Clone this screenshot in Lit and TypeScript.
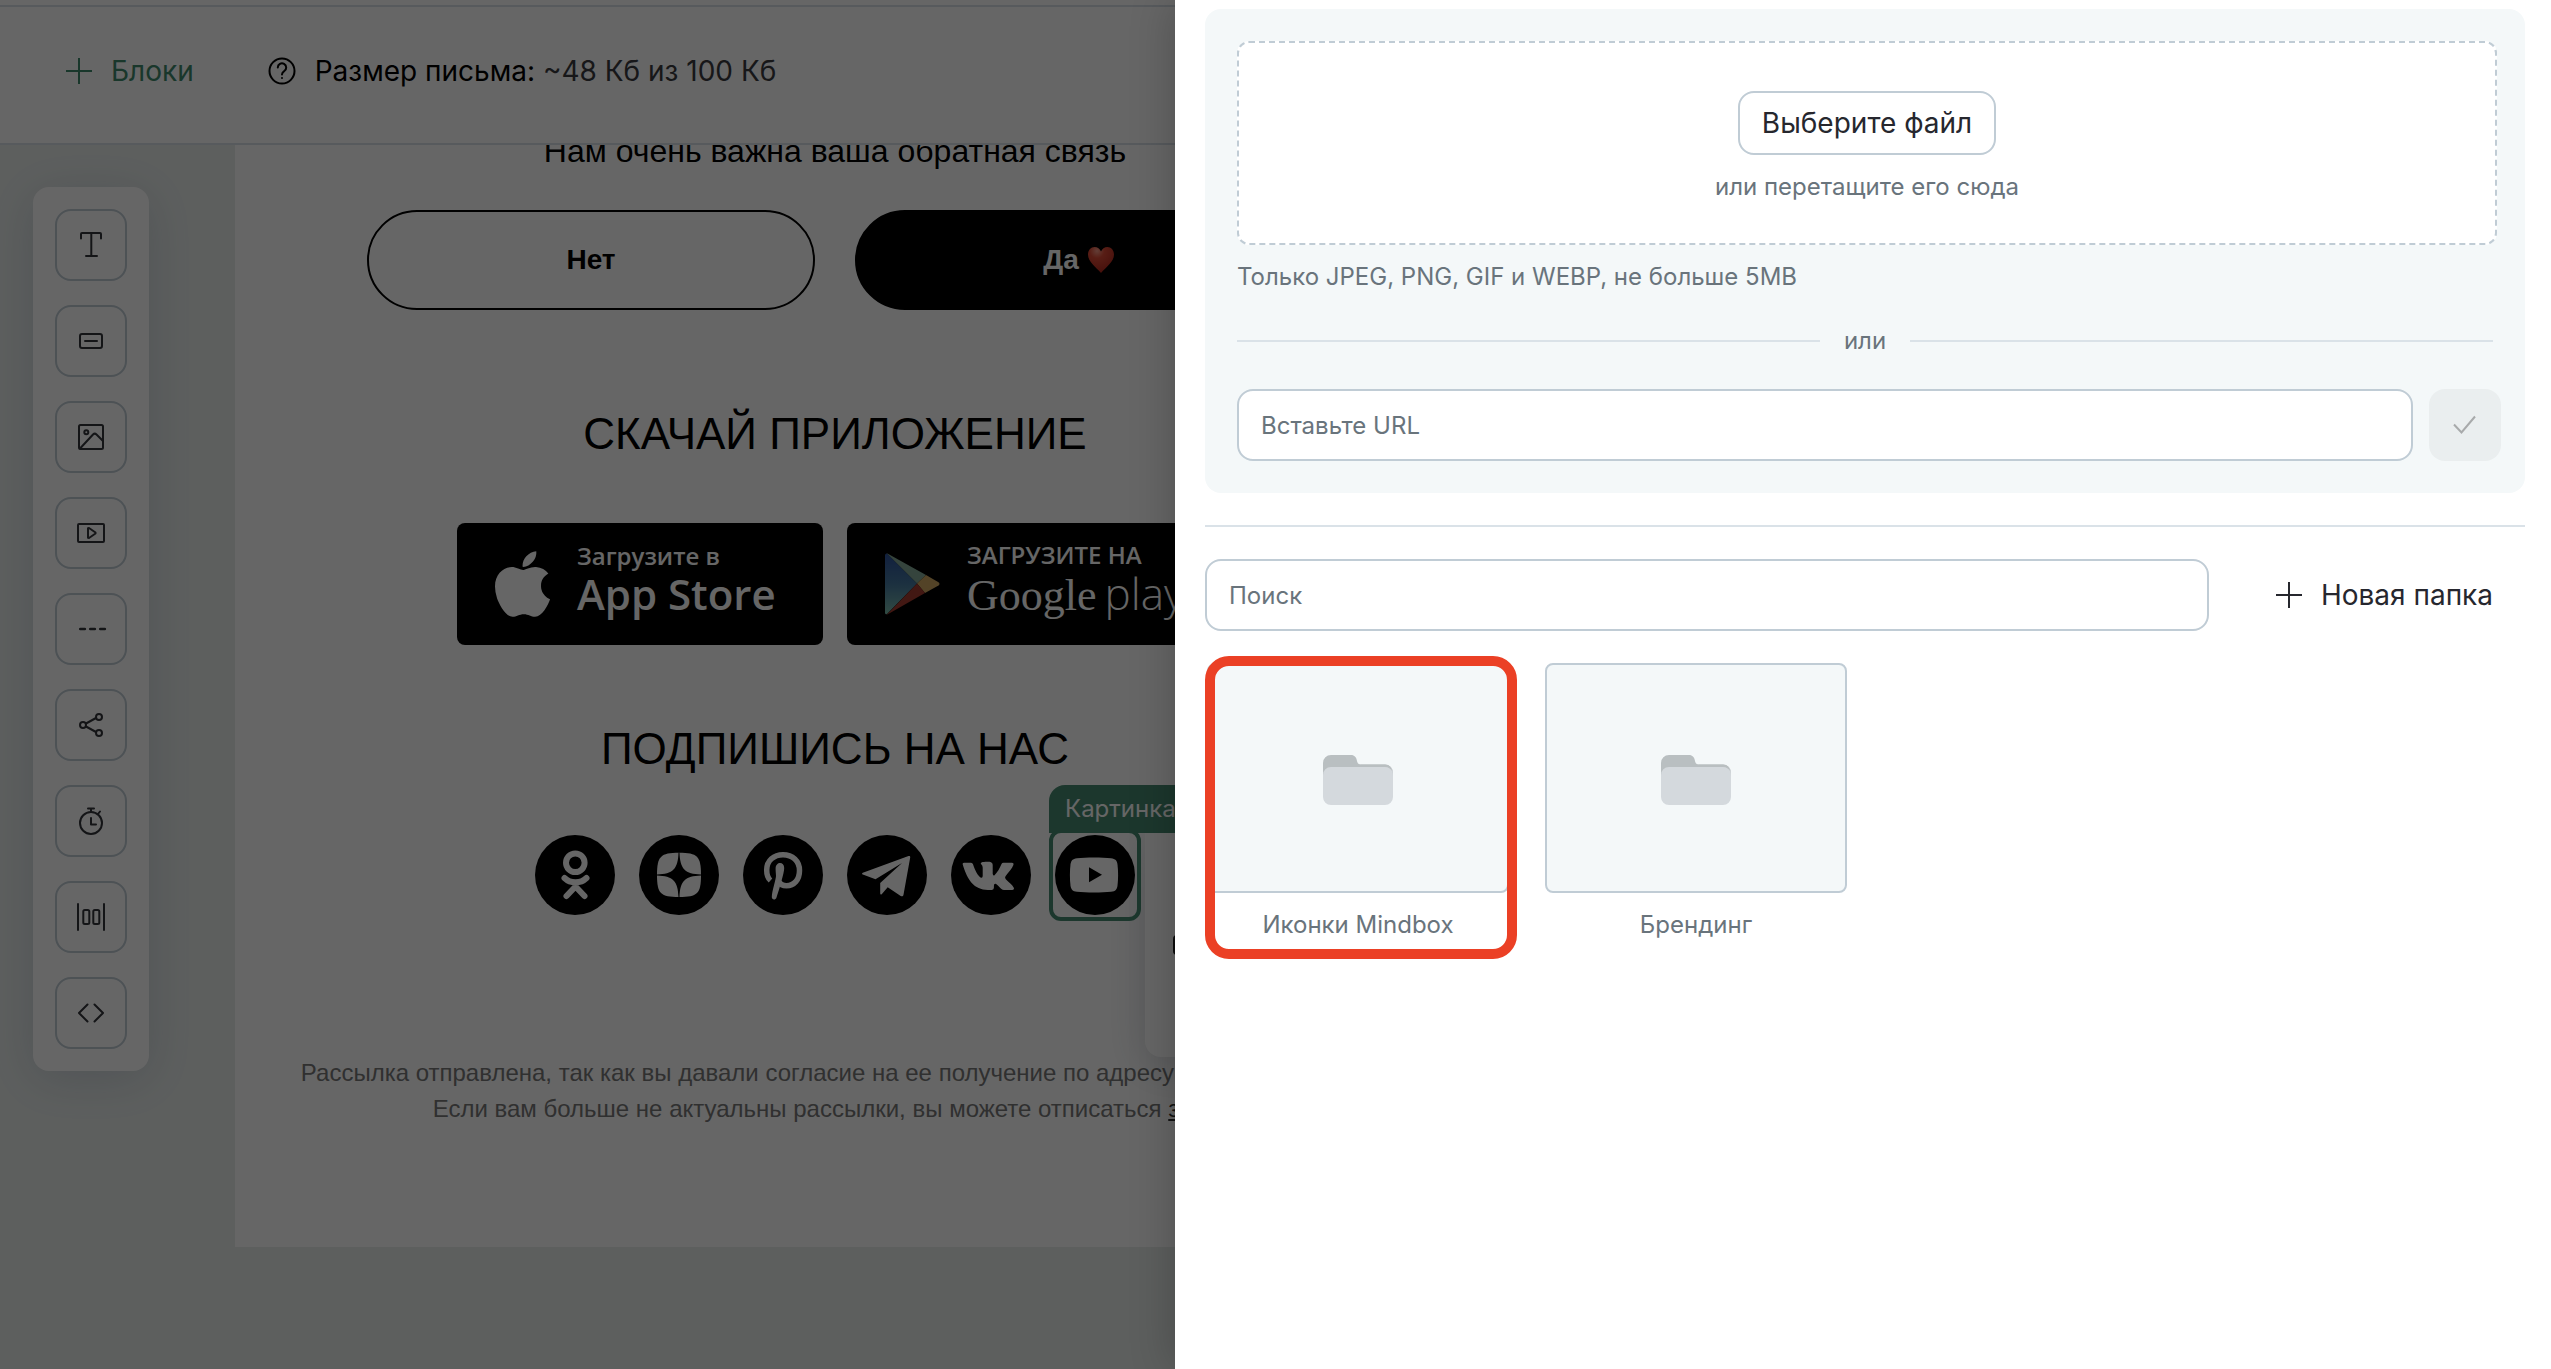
import { LitElement, html, svg, css, type SVGTemplateResult } from "lit";
import { customElement, property } from "lit/decorators.js";

interface Tool {
  label: string;
  icon: SVGTemplateResult;
}

const TOOLS: Tool[] = [
  { label: "Текст", icon: svg`<path d="M8 11.500V7a1 1 0 0 1 1-1h18a1 1 0 0 1 1 1v4.500M18.300 6v23M13 29h11"/>` },
  { label: "Кнопка", icon: svg`<rect x="7" y="11" width="22" height="14" rx="2"/><path d="M12 18h12"/>` },
  {
    label: "Изображение",
    icon: svg`<rect x="6" y="6" width="24" height="24" rx="1.500"/><circle cx="13.300" cy="13.300" r="2"/><path d="M7 29.500L20 15.500a2.500 2.500 0 0 1 3.500 0L30 22"/>`,
  },
  {
    label: "Видео",
    icon: svg`<rect x="5" y="9" width="26" height="18" rx="1"/><path d="M15 13.200v9.600l1 .2 6.500-4.500v-1L16 13z"/>`,
  },
  { label: "Разделитель", icon: svg`<path stroke-width="2.700" d="M7.300 18h4.500M17.300 18h4.500M27.300 18h4.500"/>` },
  {
    label: "Соцсети",
    icon: svg`<circle cx="10" cy="18" r="3"/><circle cx="26" cy="10" r="3"/><circle cx="26" cy="26" r="3"/><path d="M13 16.500l10-5.500M13 19.500L23 25"/>`,
  },
  {
    label: "Таймер",
    icon: svg`<circle cx="18" cy="20" r="11"/><path d="M15 5.500h6M18 5.500V9M25 11l2-2.500M18 15v6.500h5"/>`,
  },
  {
    label: "Колонки",
    icon: svg`<path d="M5 5v26M31 5v26"/><rect x="10.300" y="11" width="6" height="14" rx="1.500"/><rect x="20.300" y="11" width="6" height="14" rx="1.500"/>`,
  },
  { label: "HTML", icon: svg`<path d="M14.500 9.500L6 18l8.500 8.500M21.500 9.500L30 18l-8.500 8.500"/>` },
];

interface Social {
  name: string;
  selected?: boolean;
  mark: SVGTemplateResult;
}

const SOCIALS: Social[] = [
  {
    name: "Одноклассники",
    mark: svg`<g fill="none" stroke="#fff" stroke-width="6" stroke-linecap="round" stroke-linejoin="round">
      <circle cx="40.300" cy="27.700" r="9.300"/><path d="M29.500 43c6 5.800 16 5.800 22 0M31.500 61l9-9.500 9 9.500M40.500 47.500v4"/></g>`,
  },
  {
    name: "Дзен",
    mark: svg`<path fill="#fff" d="M40 17.700c18.500 0 22 3.500 22 22.300s-3.500 22-22 22-22-3.300-22-22 3.500-22.300 22-22.300z"/>
      <path d="M39.500 17.500h1C41 34 46 39 62 39.500v1C46 41 41 46 40.500 62h-1C39 46 34 41 18 40.500v-1C34 39 39 34 39.500 17.500z"/>`,
  },
  {
    name: "Pinterest",
    mark: svg`<path fill="none" stroke="#fff" stroke-width="5.500" d="M27.500 45.500C24.500 43 23.700 38.500 23.700 35 23.700 25.500 31 19.700 40 19.700c9.500 0 16.500 6.300 16.500 15.800S51 50.700 43.500 50.700c-4 0-6.500-2-7.500-4"/>
      <path fill="#fff" d="M32.600 33.500c0-7 8.600-7.500 8.600-.5 0 5-5.200 22-7.700 29.500-1 3-4.800 2.500-4.700-.5.200-6 4.200-18 4.200-21 0-2-.4-5-.4-7.500z"/>`,
  },
  {
    name: "Telegram",
    mark: svg`<path fill="#fff" d="M15.800 37.700L61.500 21c1.300-.4 1.900.3 1.700 1.500l-6.700 37.300c-.4 1.600-1.500 1.900-2.800 1.100L40.700 52.300l-6 6.900c-.7.700-1.500.5-1.500-.6V48L55 28 28.500 44.300 15.800 39.500c-1-.4-1-1.400 0-1.800z"/>`,
  },
  {
    name: "ВКонтакте",
    mark: svg`<path fill="#fff" d="M11.700 29.500q-.5-1.800 1.300-1.800h7q1.500 0 2 1.500c2 6 5 12 8 13.500q1.700.5 1.700-2v-8q0-2.300-1.500-3.500-1.200-1.200.3-1.700c2-.8 8-.8 9.500-.3q1.700.5 1.700 2.500v9q.3 2.500 1.800 1.500c3-3 5-7 7-11.300q.5-1.200 2-1.200h8.500q2 .2 1.500 2c-1.500 4-5 7.500-8 11.500q-1 1.500.3 3c3 3 6.500 5.500 8 8.500q.8 2-1.700 2.200h-8q-1.500 0-3-1.200c-2-2-4-4.500-5.500-5q-1.700-.3-1.700 2v2q0 2-2 2.200h-4c-14 0-20.500-10-25.200-25.400z"/>`,
  },
  {
    name: "YouTube",
    selected: true,
    mark: svg`<path fill="#fff" d="M22 23.200c9-1 25-1 34 0 4.500.5 6 2.300 6.500 6.300.8 6.500.8 14.500 0 21-.5 4-2 5.800-6.500 6.300-9 1-25 1-34 0-4.500-.5-6-2.300-6.500-6.300-.8-6.500-.8-14.500 0-21 .5-4 2-5.800 6.500-6.300z"/><path d="M34 32.300v14.900l13-7.500z"/>`,
  },
];

const plusIcon = html`<svg class="plus" viewBox="0 0 26 26" width="26" height="26" aria-hidden="true">
  <path d="M13 0v26M0 13h26" fill="none" stroke="currentColor" stroke-width="2" />
</svg>`;

@customElement("tool-rail")
export class ToolRail extends LitElement {
  static styles = css`
    :host {
      display: block;
      flex: none;
    }
    .rail {
      display: flex;
      flex-direction: column;
      gap: 24px;
      padding: 22px;
      border-radius: 16px;
      background: #fff;
      box-shadow: 0 8px 48px rgba(70, 90, 130, 0.2);
    }
    .tool {
      display: flex;
      align-items: center;
      justify-content: center;
      width: 72px;
      height: 72px;
      padding: 0;
      border: 2px solid #c0ccd5;
      border-radius: 16px;
      background: none;
      color: #33353a;
    }
    svg {
      fill: none;
      stroke: currentColor;
      stroke-width: 2;
      stroke-linejoin: round;
      stroke-linecap: round;
    }
  `;

  render() {
    return html`<nav class="rail" aria-label="Блоки письма">
      ${TOOLS.map(
        (t) => html`<button class="tool" type="button" aria-label=${t.label}>
          <svg viewBox="0 0 36 36" width="36" height="36">${t.icon}</svg>
        </button>`,
      )}
    </nav>`;
  }
}

@customElement("email-preview")
export class EmailPreview extends LitElement {
  static styles = css`
    :host {
      display: block;
      flex: 0 1 1200px;
      font-family: "Liberation Sans", Arial, sans-serif;
      color: #000;
    }
    .mail {
      display: flex;
      flex-direction: column;
      align-items: center;
      padding-bottom: 120px;
      background: #fff;
      white-space: nowrap;
    }
    .lead {
      margin: -14px 0 0;
      font-size: 32px;
      line-height: 40px;
      font-weight: 400;
    }
    .answers {
      display: flex;
      gap: 40px;
      margin-top: 39px;
    }
    .answer {
      display: flex;
      align-items: center;
      justify-content: center;
      gap: 8px;
      box-sizing: border-box;
      width: 448px;
      height: 100px;
      border: 2px solid #000;
      border-radius: 50px;
      font-size: 28px;
      font-weight: 700;
      color: #000;
      text-decoration: none;
    }
    .filled {
      background: #000;
      color: #fff;
    }
    .title {
      margin: 98px 0 0;
      font-size: 44px;
      line-height: 52px;
      font-weight: 400;
    }
    .follow {
      margin-top: 78px;
    }
    .stores {
      display: flex;
      gap: 24px;
      margin-top: 63px;
    }
    .store {
      display: flex;
      align-items: center;
      box-sizing: border-box;
      width: 366px;
      height: 122px;
      padding-left: 38px;
      gap: 27px;
      border-radius: 8px;
      background: #000;
      color: #fff;
      text-decoration: none;
      font-family: "Open Sans", "Noto Sans", sans-serif;
    }
    .store-text {
      display: flex;
      flex-direction: column;
      padding-bottom: 8px;
    }
    .store-small {
      font-size: 24px;
      line-height: 28px;
      font-weight: 600;
    }
    .store-big {
      display: flex;
      align-items: baseline;
      gap: 8px;
      font-size: 44px;
      line-height: 48px;
      font-weight: 400;
    }
    .semibold {
      font-size: 42px;
      font-weight: 600;
    }
    .google {
      font-family: "Liberation Serif", serif;
    }
    .play {
      font-weight: 300;
    }
    .socials {
      display: flex;
      gap: 24px;
      margin-top: 60px;
    }
    .social {
      position: relative;
      display: block;
      width: 80px;
      height: 80px;
    }
    .social svg {
      display: block;
    }
    .frame {
      position: absolute;
      inset: -6px;
      border: 4px solid #468a70;
      border-radius: 12px;
    }
    .tag {
      position: absolute;
      left: -6px;
      bottom: 82px;
      padding: 0 16px;
      border-radius: 16px 16px 0 0;
      background: #468a70;
      color: #fff;
      font: 400 24px/48px Inter, sans-serif;
    }
    .popover {
      position: absolute;
      left: 90px;
      top: -2px;
      box-sizing: border-box;
      width: 400px;
      height: 224px;
      padding: 102px 28px 0;
      border-radius: 0 0 16px 16px;
      background: #fff;
      box-shadow: 0 8px 40px rgba(50, 60, 80, 0.2);
    }
    .check {
      display: block;
      width: 16px;
      height: 16px;
      border: 2px solid #222;
      border-radius: 4px;
    }
    .footer {
      margin: 140px 0 0;
      font-size: 24px;
      line-height: 36px;
      text-align: center;
      color: #787878;
    }
    .footer a {
      color: #333;
    }
  `;

  render() {
    return html`<article class="mail">
      <h2 class="lead">Нам очень важна ваша обратная связь</h2>
      <div class="answers">
        <a class="answer" href="#no">Нет</a>
        <a class="answer filled" href="#yes"
          >Да
          <svg viewBox="0 0 28 28" width="28" height="28" aria-hidden="true">
            <defs>
              <radialGradient id="heart" cx="35%" cy="15%" r="80%">
                <stop offset="0" stop-color="#f59a88" />
                <stop offset="0.350" stop-color="#dc4a36" />
                <stop offset="1" stop-color="#b52c20" />
              </radialGradient>
            </defs>
            <path fill="url(#heart)" d="M14 27C9 21 1 16 1 8.500 1 4 4 1 7.500 1c3 0 5.500 2 6.500 4.500C15 3 17.500 1 20.500 1 24 1 27 4 27 8.500 27 16 19 21 14 27z" />
          </svg>
        </a>
      </div>

      <h2 class="title">СКАЧАЙ ПРИЛОЖЕНИЕ</h2>
      <div class="stores">
        <a class="store" href="#app-store">
          <svg viewBox="4 32 376 448" width="55" height="66" aria-hidden="true">
            <path fill="#fff" d="M318.700 268.700c-.2-36.700 16.400-64.400 50-84.800-18.800-26.900-47.200-41.700-84.700-44.600-35.500-2.800-74.300 20.700-88.500 20.700-15 0-49.400-19.700-76.400-19.700C63.300 141.200 4 184.800 4 273.500q0 39.300 14.400 81.200c12.800 36.700 59 126.700 107.200 125.200 25.200-.6 43-17.900 75.800-17.900 31.800 0 48.300 17.900 76.400 17.900 48.600-.7 90.400-82.500 102.600-119.300-65.200-30.700-61.700-90-61.700-91.900zm-56.600-164.200c27.300-32.400 24.800-61.900 24-72.500-24.100 1.400-52 16.400-67.900 34.900-17.500 19.800-27.800 44.300-25.600 71.900 26.100 2 49.900-11.400 69.500-34.300z" />
          </svg>
          <span class="store-text">
            <span class="store-small">Загрузите в</span>
            <span class="store-big"><span class="semibold">App Store</span></span>
          </span>
        </a>
        <a class="store" href="#google-play">
          <svg viewBox="0 0 55 62" width="55" height="62" aria-hidden="true">
            <defs>
              <linearGradient id="blue" x1="0" y1="0" x2="0" y2="1">
                <stop offset="0" stop-color="#2d519c" />
                <stop offset="0.500" stop-color="#4679a0" />
                <stop offset="1" stop-color="#7cbcaa" />
              </linearGradient>
            </defs>
            <path fill="url(#blue)" d="M0 2v58q.5 2 2 1l30-30.500L2 .500Q.5 0 0 2z" />
            <path fill="#86ab98" d="M1.500 0L41 22l-9 8.500z" />
            <path fill="#d0a962" d="M41 22l12.500 7.300q2 1.700 0 3.200L40 40l-8-9.500z" />
            <path fill="#a53c30" d="M32 30.500l8 9.500L1.500 62z" />
          </svg>
          <span class="store-text">
            <span class="store-small">ЗАГРУЗИТЕ НА</span>
            <span class="store-big"><span class="google">Google</span> <span class="play">play</span></span>
          </span>
        </a>
      </div>

      <h2 class="title follow">ПОДПИШИСЬ НА НАС</h2>
      <div class="socials">
        ${SOCIALS.map(
          (s) => html`<a class="social" href="#social" aria-label=${s.name}>
            <svg viewBox="0 0 80 80" width="80" height="80"><circle cx="40" cy="40" r="40" />${s.mark}</svg>
            ${s.selected
              ? html`<span class="popover"><span class="check"></span></span>
                  <span class="frame"></span><span class="tag">Картинка</span>`
              : null}
          </a>`,
        )}
      </div>

      <p class="footer">
        Рассылка отправлена, так как вы давали согласие на ее получение по адресу info@example.ru.<br />
        Если вам больше не актуальны рассылки, вы можете отписаться <a href="#unsubscribe">здесь</a>.
      </p>
    </article>`;
  }
}

@customElement("folder-card")
export class FolderCard extends LitElement {
  @property() name = "";
  @property({ type: Boolean, reflect: true }) highlighted = false;

  static styles = css`
    :host {
      position: relative;
      display: block;
    }
    .card {
      display: flex;
      flex-direction: column;
      align-items: center;
      gap: 16px;
      padding: 0;
      border: 0;
      background: none;
      font: 400 24px/32px Inter, sans-serif;
      color: #69747c;
    }
    .tile {
      display: flex;
      align-items: center;
      justify-content: center;
      box-sizing: border-box;
      width: 302px;
      height: 230px;
      padding-top: 4px;
      border: 2px solid #c0ccd5;
      border-radius: 8px;
      background: #f4f8f9;
    }
    :host([highlighted])::after {
      content: "";
      position: absolute;
      inset: -7px -8px -18px -2px;
      border: 10px solid #eb4025;
      border-radius: 24px;
      pointer-events: none;
    }
  `;

  render() {
    return html`<button class="card" type="button">
      <span class="tile">
        <svg viewBox="0 0 70 50" width="70" height="50" aria-hidden="true">
          <path fill="#b9bfc1" d="M0 20V8a8 8 0 0 1 8-8h20c3.500 0 5.500 2.500 6 6 .4 2.500 2 3.500 4.500 3.500H62a8 8 0 0 1 8 8V30H0z" />
          <path fill="#d4d9dd" d="M8 12h54c3 0 5.500-.5 6.500 1 1 1.500 1.500 4 1.500 8v21a8 8 0 0 1-8 8H8a8 8 0 0 1-8-8V20a8 8 0 0 1 8-8z" />
          <path fill="#b9bfc1" d="M38 9.500H62c4 0 6.500 3 7.500 7-2-3-4-4.500-7.500-4.500H36z" />
        </svg>
      </span>
      <span>${this.name}</span>
    </button>`;
  }
}

@customElement("image-drawer")
export class ImageDrawer extends LitElement {
  static styles = css`
    :host {
      display: block;
      box-sizing: border-box;
      padding: 9px 26px 0 30px;
      background: #fff;
      box-shadow: -4px 0 40px rgba(0, 0, 0, 0.2);
      font: 400 24px/32px Inter, sans-serif;
      color: #69747c;
    }
    .upload {
      display: flex;
      flex-direction: column;
      padding: 32px 24px 32px 32px;
      border-radius: 16px;
      background: #f4f8f9;
    }
    .drop {
      display: flex;
      flex-direction: column;
      align-items: center;
      gap: 16px;
      margin-right: 4px;
      padding: 48px 0 40px;
      border: 2px dashed #c0ccd5;
      border-radius: 12px;
      background: #fff;
    }
    .choose {
      height: 64px;
      padding: 0 22px;
      border: 2px solid #c0ccd5;
      border-radius: 16px;
      background: #fff;
      font: 400 28px/32px Inter, sans-serif;
      color: #26272e;
    }
    .hint {
      margin: 16px 0 0;
    }
    .or {
      display: flex;
      align-items: center;
      gap: 24px;
      margin: 32px 8px 32px 0;
    }
    .or::before,
    .or::after {
      content: "";
      flex: 1;
      height: 2px;
      background: #dae2e8;
    }
    .row {
      display: flex;
      gap: 16px;
    }
    .field {
      flex: 1;
      min-width: 0;
      box-sizing: border-box;
      height: 72px;
      padding: 0 22px;
      border: 2px solid #c0ccd5;
      border-radius: 16px;
      background: #fff;
      font: 400 24px/32px Inter, sans-serif;
      color: #26272e;
    }
    .field::placeholder {
      color: #69747c;
      opacity: 1;
    }
    .apply {
      display: flex;
      align-items: center;
      justify-content: center;
      width: 72px;
      height: 72px;
      padding: 0;
      border: 0;
      border-radius: 16px;
      background: #eaeeef;
      color: #a8aaab;
    }
    .rule {
      height: 2px;
      margin: 32px 0;
      border: 0;
      background: #dae2e8;
    }
    .create {
      display: flex;
      align-items: center;
      gap: 19px;
      margin-left: 51px;
      padding: 0 32px 0 0;
      border: 0;
      background: none;
      font: 400 28px/32px Inter, sans-serif;
      color: #26272e;
    }
    .folders {
      display: flex;
      flex-wrap: wrap;
      gap: 36px;
      padding: 32px 2px;
    }
    .sr {
      position: absolute;
      width: 1px;
      height: 1px;
      overflow: hidden;
      clip-path: inset(50%);
    }
  `;

  render() {
    return html`
      <section class="upload">
        <div class="drop">
          <button class="choose" type="button">Выберите файл</button>
          <span>или перетащите его сюда</span>
        </div>
        <p class="hint">Только JPEG, PNG, GIF и WEBP, не больше 5MB</p>
        <div class="or">или</div>
        <div class="row">
          <label class="sr" for="url">URL изображения</label>
          <input class="field" id="url" type="url" placeholder="Вставьте URL" />
          <button class="apply" type="button" aria-label="Применить" disabled>
            <svg viewBox="0 0 24 24" width="24" height="24">
              <path d="M1 11.500l7.500 8L22 3.500" fill="none" stroke="currentColor" stroke-width="2" />
            </svg>
          </button>
        </div>
      </section>
      <hr class="rule" />
      <div class="row">
        <label class="sr" for="search">Поиск по папкам</label>
        <input class="field" id="search" type="text" placeholder="Поиск" />
        <button class="create" type="button">${plusIcon}<span>Новая папка</span></button>
      </div>
      <div class="folders">
        <folder-card name="Иконки Mindbox" highlighted></folder-card>
        <folder-card name="Брендинг"></folder-card>
      </div>
    `;
  }
}

@customElement("app-root")
export class AppRoot extends LitElement {
  static styles = css`
    :host {
      position: relative;
      display: block;
      height: 100vh;
      overflow: hidden;
      font-family: Inter, sans-serif;
      background: #e9eeec;
    }
    .editor {
      display: flex;
      flex-direction: column;
      height: 100%;
    }
    .strip {
      flex: none;
      height: 5px;
      background: #fff;
    }
    .bar {
      display: flex;
      align-items: center;
      gap: 74px;
      flex: none;
      box-sizing: border-box;
      height: 140px;
      padding: 0 66px 8px;
      border-top: 2px solid #dae2e8;
      border-bottom: 2px solid #dae2e8;
      background: #fff;
      font-size: 28px;
      line-height: 36px;
      color: #000;
      white-space: nowrap;
    }
    .blocks {
      display: flex;
      align-items: center;
      gap: 19px;
      padding: 0;
      border: 0;
      background: none;
      font: inherit;
      color: #3f8a6d;
    }
    .size {
      display: flex;
      align-items: center;
      gap: 19px;
    }
    .value {
      color: #3a3b40;
    }
    .workspace {
      flex: 1;
      display: flex;
      align-items: flex-start;
      gap: 86px;
      min-height: 0;
      padding-left: 33px;
      overflow: hidden;
    }
    .tools {
      margin-top: 42px;
    }
    .shade {
      position: absolute;
      inset: 0;
      background: rgba(0, 0, 0, 0.6);
    }
    .drawer {
      position: absolute;
      top: 0;
      right: 0;
      bottom: 0;
      width: calc(100% - 1175px);
    }
  `;

  render() {
    return html`
      <main class="editor">
        <div class="strip"></div>
        <header class="bar">
          <button class="blocks" type="button">${plusIcon}<span>Блоки</span></button>
          <div class="size">
            <svg viewBox="0 0 28 28" width="28" height="28" fill="none" stroke="#000" stroke-width="2" aria-hidden="true">
              <circle cx="14" cy="14" r="12.500" />
              <path d="M9.800 10.500a4.200 4.200 0 1 1 6.400 3.600c-1.400.9-2.200 1.600-2.200 3.400" stroke-linecap="round" />
              <circle cx="14" cy="21" r="1" fill="#000" stroke="none" />
            </svg>
            <span>Размер письма: <span class="value">~48 Кб из 100 Кб</span></span>
          </div>
        </header>
        <div class="workspace">
          <tool-rail class="tools"></tool-rail>
          <email-preview></email-preview>
        </div>
      </main>
      <div class="shade"></div>
      <image-drawer class="drawer"></image-drawer>
    `;
  }
}
